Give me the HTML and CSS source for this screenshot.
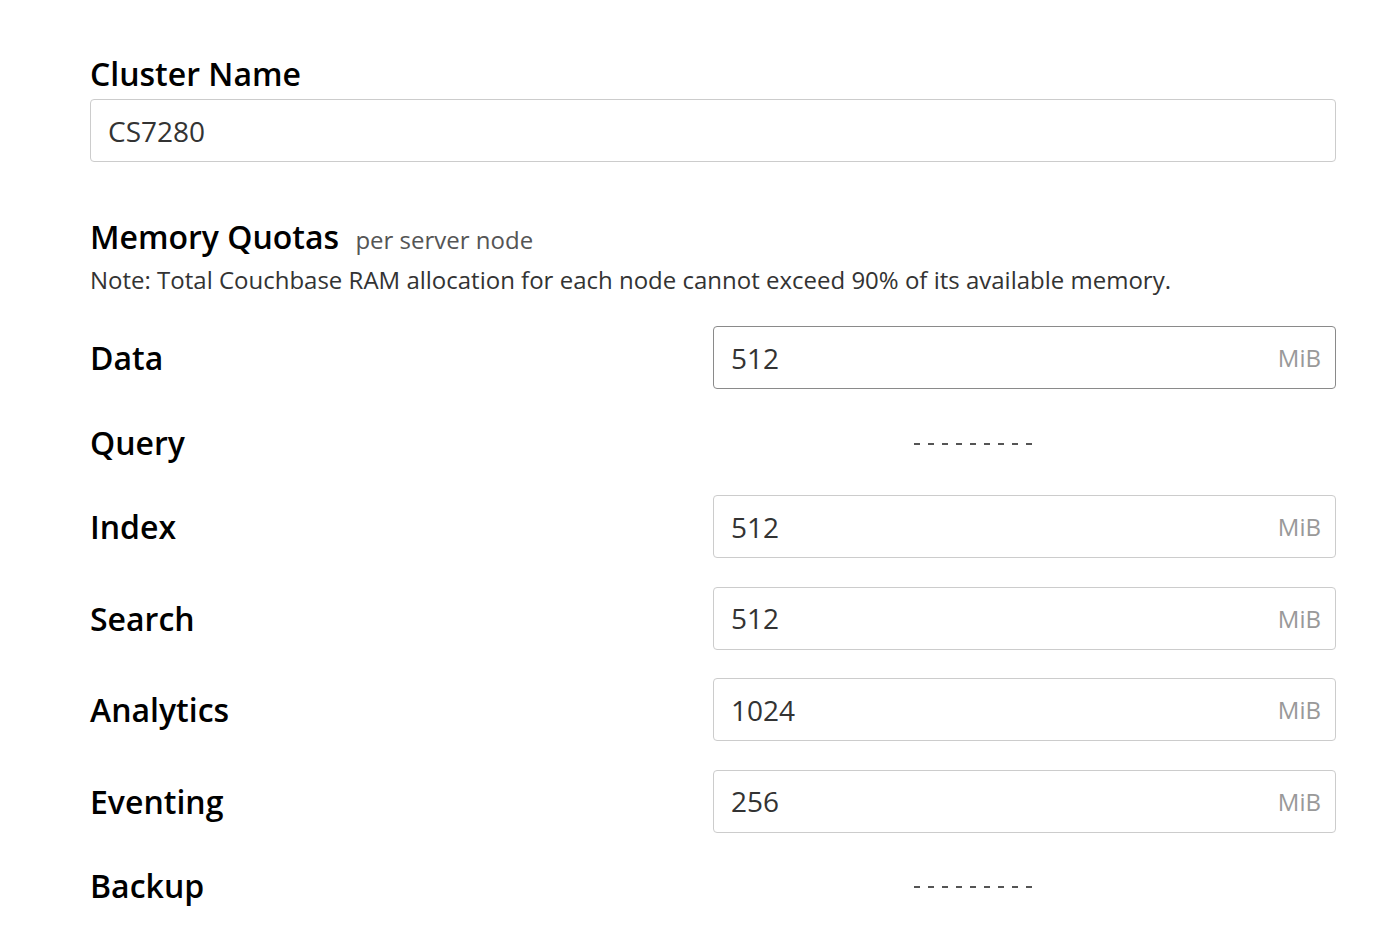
FILE: index.html
```html
<!DOCTYPE html>
<html>
<head>
<meta charset="utf-8">
<link rel="stylesheet" href="styles.css">
</head>
<body>
<div class="page">
  <section class="cluster">
    <label class="title">Cluster Name</label>
    <div class="field wide"><span class="val">CS7280</span></div>
  </section>

  <section class="quotas">
    <h2 class="heading">Memory Quotas <span class="sub">per server node</span></h2>
    <p class="note">Note: Total Couchbase RAM allocation for each node cannot exceed 90% of its available memory.</p>

    <div class="rows">
      <div class="row">
        <div class="label">Data</div>
        <div class="field focused"><span class="val">512</span><span class="unit">MiB</span></div>
      </div>
      <div class="row short">
        <div class="label">Query</div>
        <div class="dashes"></div>
      </div>
      <div class="row">
        <div class="label">Index</div>
        <div class="field"><span class="val">512</span><span class="unit">MiB</span></div>
      </div>
      <div class="row">
        <div class="label">Search</div>
        <div class="field"><span class="val">512</span><span class="unit">MiB</span></div>
      </div>
      <div class="row">
        <div class="label">Analytics</div>
        <div class="field"><span class="val">1024</span><span class="unit">MiB</span></div>
      </div>
      <div class="row">
        <div class="label">Eventing</div>
        <div class="field"><span class="val">256</span><span class="unit">MiB</span></div>
      </div>
      <div class="row short">
        <div class="label">Backup</div>
        <div class="dashes"></div>
      </div>
    </div>
  </section>
</div>
</body>
</html>
```

FILE: styles.css
```css
html, body {
  margin: 0;
  padding: 0;
  background: #fff;
}
body {
  font-family: "Open Sans", "Liberation Sans", sans-serif;
  color: #000;
}
.page {
  width: 1246px;
  padding: 54px 0 0 90px;
}
.cluster {
  display: flex;
  flex-direction: column;
}
.title {
  font-size: 32px;
  font-weight: 600;
  line-height: 40px;
  margin-bottom: 5px;
}
.field {
  box-sizing: border-box;
  height: 63px;
  border: 1.5px solid #ccc;
  border-radius: 4px;
  display: flex;
  align-items: center;
  justify-content: space-between;
  padding: 0 14px 0 17px;
}
.field.focused {
  border-color: #8a8a8a;
}
.val {
  font-size: 28px;
  color: #333;
}
.unit {
  font-size: 24px;
  color: #999;
}
.quotas {
  margin-top: 55px;
}
.heading {
  margin: 0;
  font-size: 32px;
  font-weight: 600;
  line-height: 40px;
}
.sub {
  font-size: 24px;
  font-weight: 400;
  color: #555;
  margin-left: 8px;
}
.note {
  margin: 4px 0 0;
  font-size: 24px;
  line-height: 32px;
  color: #333;
}
.rows {
  margin-top: 30px;
  display: flex;
  flex-direction: column;
  gap: 28.5px;
}
.row {
  display: grid;
  grid-template-columns: 623px 623px;
  align-items: center;
}
.row.short {
  height: 49px;
}
.label {
  font-size: 32px;
  font-weight: 600;
}
.dashes {
  margin: 3px 0 0 201px;
  width: 118px;
  height: 2px;
  background: repeating-linear-gradient(to right, #555 0 6px, transparent 6px 14px);
}
```
